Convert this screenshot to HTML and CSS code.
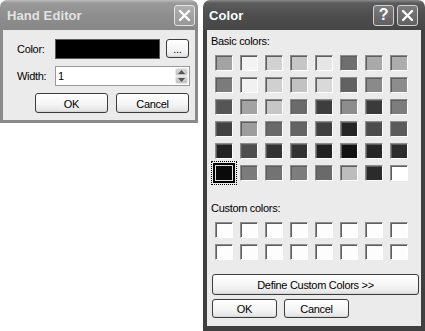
FILE: index.html
```html
<!DOCTYPE html>
<html lang="en">
<head>
    <meta charset="UTF-8">
    <title>Hand Editor</title>
    <link rel="stylesheet" href="styles.css">
</head>
<body>
    <div class="desktop">
        <!-- Hand Editor window (inactive) -->
        <div class="window hand-editor">
            <div class="titlebar">
                <span class="title">Hand Editor</span>
                <div class="tb-btn">
                    <svg width="13" height="13" viewBox="0 0 13 13"><path d="M2 2 L11 11 M11 2 L2 11" stroke="#fff" stroke-width="2.4" stroke-linecap="round"/></svg>
                </div>
            </div>
            <div class="frame">
                <div class="he-body">
                    <label class="he-label">Color:</label>
                    <div class="he-row">
                        <div class="color-box"></div>
                        <button class="btn dots-btn">...</button>
                    </div>
                    <label class="he-label" for="widthInput">Width:</label>
                    <div class="spin-input">
                        <input type="text" id="widthInput" value="1">
                        <div class="spinner">
                            <div class="spin-up"><svg width="7" height="4" viewBox="0 0 7 4"><path d="M0 4 L3.5 0 L7 4 Z" fill="#555"/></svg></div>
                            <div class="spin-down"><svg width="7" height="4" viewBox="0 0 7 4"><path d="M0 0 L3.5 4 L7 0 Z" fill="#555"/></svg></div>
                        </div>
                    </div>
                    <div class="he-buttons">
                        <button class="btn he-btn">OK</button>
                        <button class="btn he-btn">Cancel</button>
                    </div>
                </div>
            </div>
        </div>

        <!-- Color dialog (active) -->
        <div class="window color-dialog">
            <div class="titlebar">
                <span class="title">Color</span>
                <div class="tb-btn help-btn">?</div>
                <div class="tb-btn">
                    <svg width="13" height="13" viewBox="0 0 13 13"><path d="M2 2 L11 11 M11 2 L2 11" stroke="#fff" stroke-width="2.4" stroke-linecap="round"/></svg>
                </div>
            </div>
            <div class="frame">
                <div class="cd-body">
                    <div class="cd-label">Basic colors:</div>
                    <div class="swatch-grid" id="basicGrid"></div>
                    <div class="cd-label custom-label">Custom colors:</div>
                    <div class="swatch-grid" id="customGrid"></div>
                    <button class="btn define-btn">Define Custom Colors &gt;&gt;</button>
                    <div class="cd-buttons">
                        <button class="btn cd-btn">OK</button>
                        <button class="btn cd-btn">Cancel</button>
                    </div>
                </div>
            </div>
        </div>
    </div>

    <script>
        // Basic palette, already in grey as in the screenshot
        const basicColors = [
            '#a3a3a3', '#f3f3f3', '#d2d2d2', '#c6c6c6', '#e6e6e6', '#6f6f6f', '#a9a9a9', '#adadad',
            '#7b7b7b', '#f1f1f1', '#d0d0d0', '#c2c2c2', '#d9d9d9', '#626262', '#8a8a8a', '#8d8d8d',
            '#555555', '#a3a3a3', '#c6c6c6', '#6b6b6b', '#3d3d3d', '#8d8d8d', '#3a3a3a', '#7d7d7d',
            '#414141', '#9d9d9d', '#696969', '#646464', '#3f3f3f', '#262626', '#4c4c4c', '#5b5b5b',
            '#232323', '#4f4f4f', '#333333', '#333333', '#222222', '#121212', '#272727', '#2d2d2d',
            '#0a0a0a', '#7b7b7b', '#737373', '#7d7d7d', '#6a6a6a', '#bdbdbd', '#2b2b2b', '#ffffff'
        ];
        const selectedIndex = 40;

        // Function to fill a grid with swatches
        function renderSwatches(grid, colors, selected) {
            colors.forEach((color, i) => {
                const cell = document.createElement('div');
                cell.className = 'swatch' + (i === selected ? ' selected' : '');
                cell.style.background = color;
                grid.appendChild(cell);
            });
        }

        renderSwatches(document.getElementById('basicGrid'), basicColors, selectedIndex);
        renderSwatches(document.getElementById('customGrid'), new Array(16).fill('#fdfdfd'), -1);
    </script>
</body>
</html>
```

FILE: styles.css
```css
body {
    margin: 0;
    background-color: #fff;
    font-family: "Liberation Sans", Arial, sans-serif;
    font-size: 11px;
    letter-spacing: -0.3px;
    color: #000;
}

.desktop {
    display: flex;
    align-items: flex-start;
    gap: 5px;
}

.window {
    display: flex;
    flex-direction: column;
    box-sizing: border-box;
}

.hand-editor {
    width: 198px;
    height: 123px;
}

.color-dialog {
    width: 222px;
    height: 331px;
}

/* Title bars */
.titlebar {
    height: 30px;
    flex: none;
    display: flex;
    align-items: center;
    gap: 3px;
    box-sizing: border-box;
    border-radius: 7px 7px 0 0;
}

.title {
    flex: 1;
    font-size: 13px;
    font-weight: bold;
    letter-spacing: 0.1px;
}

.hand-editor .titlebar {
    padding: 0 3px 0 7px;
    background: linear-gradient(#bcbcbc, #9a9a9a 3px, #8e8e8e 50%, #878787);
    color: #e2e2e2;
}

.color-dialog .titlebar {
    padding: 0 7px 0 6px;
    background: linear-gradient(#8a8a8a, #5c5c5c 3px, #4e4e4e 50%, #464646);
    color: #fff;
}

.tb-btn {
    width: 21px;
    height: 21px;
    box-sizing: border-box;
    border: 1px solid #e4e4e4;
    border-radius: 3px;
    display: flex;
    align-items: center;
    justify-content: center;
}

.hand-editor .tb-btn {
    background: linear-gradient(#b0b0b0, #979797);
}

.color-dialog .tb-btn {
    background: linear-gradient(#7c7c7c, #606060);
    border-color: #d0d0d0;
}

.help-btn {
    color: #fff;
    font-size: 16px;
    font-weight: bold;
}

/* Window frames */
.frame {
    flex: 1;
    box-sizing: border-box;
    background-color: #ebebeb;
}

.hand-editor .frame {
    border: solid #8a8a8a;
    border-width: 0 3px 3px;
}

.color-dialog .frame {
    border: solid #404040;
    border-width: 0 4px 5px;
}

/* Buttons */
.btn {
    font-family: inherit;
    font-size: 11px;
    letter-spacing: -0.3px;
    color: #000;
    padding: 1px 0 0;
    box-sizing: border-box;
    border: 1px solid #3c3c3c;
    border-radius: 3px;
    background: linear-gradient(#ffffff, #f4f4f4 60%, #e2e2e2);
    box-shadow: inset 0 -1px 0 #d6d6d6;
}

/* Hand Editor body */
.he-body {
    display: grid;
    grid-template-columns: 38px 135px;
    grid-auto-rows: 20px;
    row-gap: 7px;
    padding: 9px 0 0 14px;
}

.he-label {
    display: flex;
    align-items: center;
}

.he-row {
    display: flex;
    justify-content: space-between;
    align-items: flex-start;
}

.color-box {
    width: 105px;
    height: 20px;
    box-sizing: border-box;
    background-color: #000;
    border: 1px solid #5a5a5a;
}

.dots-btn {
    width: 23px;
    height: 19px;
    margin-right: 1px;
    line-height: 12px;
}

.spin-input {
    position: relative;
    display: flex;
}

.spin-input input {
    width: 100%;
    height: 20px;
    box-sizing: border-box;
    border: 1px solid #9a9a9a;
    padding: 0 0 0 2px;
    font-family: inherit;
    font-size: 11px;
    background-color: #fff;
}

.spinner {
    position: absolute;
    right: 2px;
    top: 2px;
    width: 13px;
    height: 16px;
    display: flex;
    flex-direction: column;
}

.spin-up,
.spin-down {
    flex: 1;
    display: flex;
    align-items: center;
    justify-content: center;
    background: linear-gradient(#d8d8d8, #c0c0c0);
    border: 1px solid #e8e8e8;
    border-radius: 2px;
}

.he-buttons {
    grid-column: 1 / -1;
    display: flex;
    justify-content: flex-end;
    gap: 8px;
    padding-right: 1px;
}

.he-btn {
    width: 73px;
    height: 20px;
}

/* Color dialog body */
.cd-body {
    display: flex;
    flex-direction: column;
    padding: 5px 0 0 4px;
}

.cd-label {
    height: 13px;
    line-height: 13px;
    margin-bottom: 7px;
}

.custom-label {
    margin-top: 21px;
}

.swatch-grid {
    display: grid;
    grid-template-columns: repeat(8, 18px);
    grid-auto-rows: 16px;
    column-gap: 7px;
    row-gap: 6px;
    padding-left: 4px;
}

.swatch {
    box-sizing: border-box;
    border: 1px solid;
    border-color: #8c8c8c #ffffff #ffffff #8c8c8c;
    box-shadow: inset 1px 1px 0 #5e5e5e;
}

.swatch.selected {
    border: 1px solid #e0e0e0;
    box-shadow: 0 0 0 2px #000;
    outline: 1px dotted #000;
    outline-offset: 3px;
}

.define-btn {
    width: 207px;
    height: 21px;
    margin: 14px 0 0 1px;
}

.cd-buttons {
    display: flex;
    gap: 7px;
    margin: 4px 0 0 1px;
}

.cd-btn {
    width: 65px;
    height: 19px;
}
```
